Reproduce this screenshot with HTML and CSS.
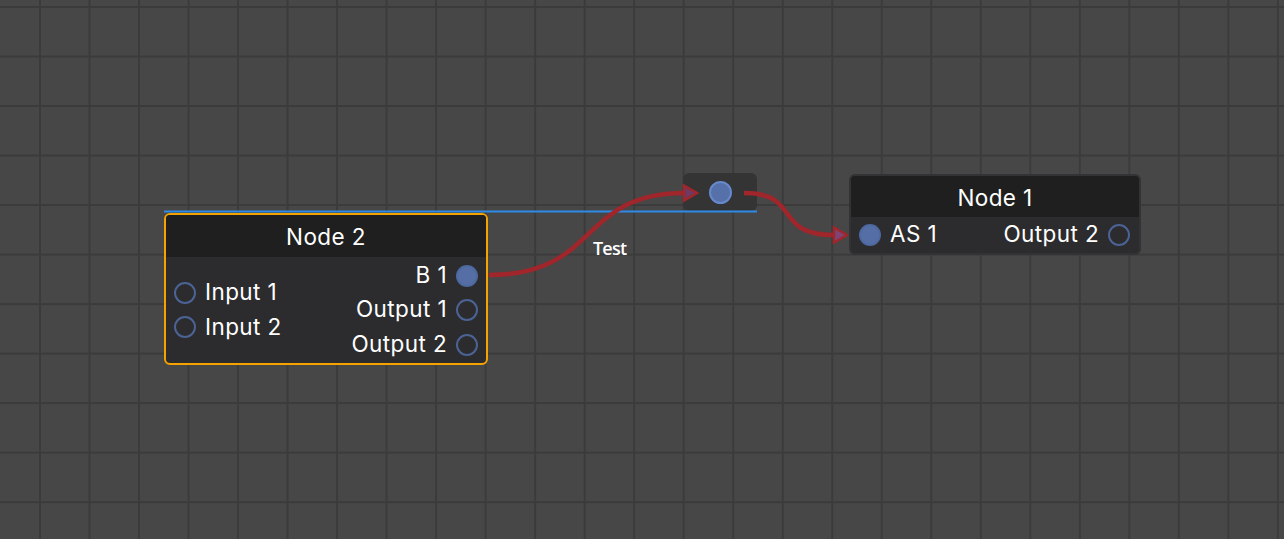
FILE: index.html
```html
<!DOCTYPE html>
<html>
<head>
<meta charset="utf-8">
<link rel="stylesheet" href="styles.css">
</head>
<body>
<div class="canvas">
  <div class="reroute"><span class="socket filled"></span></div>

  <div class="node node-2 selected">
    <div class="header">Node 2</div>
    <div class="body">
      <div class="ports inputs">
        <div class="port"><span class="socket"></span><span class="label">Input 1</span></div>
        <div class="port"><span class="socket"></span><span class="label">Input 2</span></div>
      </div>
      <div class="ports outputs">
        <div class="port"><span class="label">B 1</span><span class="socket filled"></span></div>
        <div class="port"><span class="label">Output 1</span><span class="socket"></span></div>
        <div class="port"><span class="label">Output 2</span><span class="socket"></span></div>
      </div>
    </div>
  </div>

  <div class="node node-1">
    <div class="header">Node 1</div>
    <div class="body">
      <div class="ports inputs">
        <div class="port"><span class="socket filled"></span><span class="label">AS 1</span></div>
      </div>
      <div class="ports outputs">
        <div class="port"><span class="label">Output 2</span><span class="socket"></span></div>
      </div>
    </div>
  </div>

  <svg class="wires" width="1284" height="539" viewBox="0 0 1284 539">
    <line x1="164" y1="211.5" x2="757" y2="211.5" stroke="#2f8ae8" stroke-width="2"/>
    <path d="M489 275 C 600 275, 578 193, 685 193" fill="none" stroke="#a0262b" stroke-width="4.5"/>
    <polygon points="684,185.5 697,193 684,200.5" fill="#6d3a63" stroke="#a0262b" stroke-width="2.5" stroke-linejoin="miter"/>
    <path d="M744 193 C 802 193, 772 235, 834 235" fill="none" stroke="#a0262b" stroke-width="4.5"/>
    <polygon points="834,227.5 847,235 834,242.5" fill="#7e4477" stroke="#a0262b" stroke-width="2.5" stroke-linejoin="miter"/>
  </svg>
  <div class="wire-label">Test</div>
</div>
</body>
</html>
```
FILE: styles.css
```css
* { box-sizing: border-box; }
html, body { margin: 0; padding: 0; }
body {
  width: 1284px;
  height: 539px;
  overflow: hidden;
  font-family: Inter, "Noto Sans", "Liberation Sans", sans-serif;
}
.canvas {
  position: relative;
  width: 1284px;
  height: 539px;
  background-color: #474747;
  background-image:
    linear-gradient(to right, #3b3b3b 0, #3b3b3b 2px, transparent 2px),
    linear-gradient(to bottom, #3b3b3b 0, #3b3b3b 2px, transparent 2px);
  background-size: 49.52px 49.52px;
  background-position: 39px 6px;
}
.node {
  position: absolute;
  display: flex;
  flex-direction: column;
  background: #2c2c2e;
  border-radius: 6px;
  overflow: hidden;
  color: #fff;
  font-size: 22.5px;
  letter-spacing: 0.4px;
}
.node-2 {
  left: 164px;
  top: 213px;
  width: 324px;
  height: 152px;
  border: 2px solid #f5a300;
}
.node-1 {
  left: 849px;
  top: 174px;
  width: 292px;
  height: 81px;
  border: 2px solid #333335;
}
.header {
  height: 42px;
  flex: none;
  background: #1f1f1f;
  display: flex;
  align-items: center;
  justify-content: center;
  padding-top: 1px;
}
.node-1 .header { height: 41px; }
.body {
  flex: 1;
  display: flex;
  justify-content: space-between;
  align-items: center;
  padding: 0 8px;
}
.node-1 .body { padding: 0 9px 0 8px; }
.ports {
  display: flex;
  flex-direction: column;
}
.outputs { align-items: flex-end; }
.port {
  height: 34.5px;
  display: flex;
  align-items: center;
  gap: 9px;
}
.label { line-height: 1; margin-top: -1px; }
.socket {
  width: 22px;
  height: 22px;
  border-radius: 50%;
  border: 2.5px solid #4b6394;
  flex: none;
}
.socket.filled {
  background: #566ea6;
  border-color: #4e68a0;
}
.reroute {
  position: absolute;
  left: 683px;
  top: 173px;
  width: 74px;
  height: 38px;
  border-radius: 6px;
  background: #343434;
  display: flex;
  align-items: center;
  justify-content: center;
}
.reroute .socket {
  width: 23px;
  height: 23px;
  border-color: #6688cc;
  background: #5671a9;
}
.wires {
  position: absolute;
  left: 0;
  top: 0;
  pointer-events: none;
}
.wire-label {
  position: absolute;
  left: 593px;
  top: 236px;
  font-family: "Open Sans", "Noto Sans", sans-serif;
  font-weight: 600;
  font-size: 18px;
  letter-spacing: -0.8px;
  color: #fff;
}
```
